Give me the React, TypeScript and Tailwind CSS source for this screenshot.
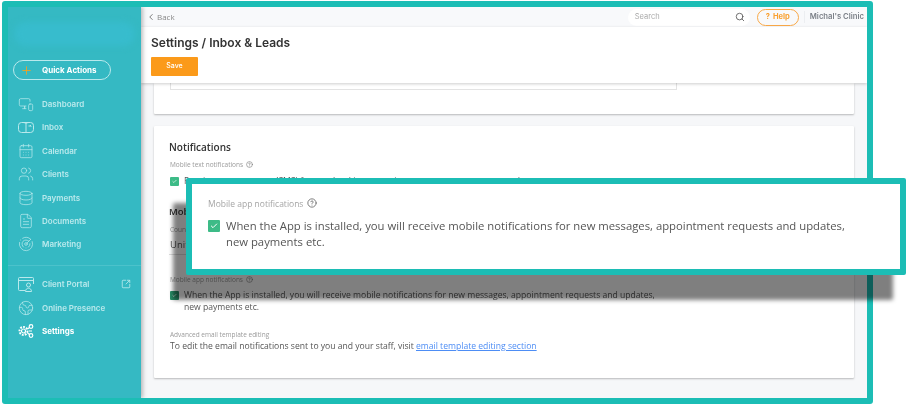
import {
  CalendarDays,
  Check,
  ChevronLeft,
  CircleHelp,
  Database,
  Earth,
  FileText,
  MonitorSmartphone,
  Plus,
  Radar,
  Search,
  SquareArrowOutUpRight,
  Users,
} from "lucide-react";
import type { ReactNode } from "react";

const sans = "font-['Open_Sans',sans-serif]";
const nav = "font-['Inter',sans-serif]";

function InboxIcon() {
  return (
    <svg width="16" height="13" viewBox="0 0 16 13" fill="none" stroke="currentColor" strokeWidth="1">
      <rect x="0.5" y="1.500" width="15" height="10" rx="3" />
      <path d="M5 1.500c1.500 0 2.500 0.700 3 1.500v8.500M8 3c0.500-0.800 1.500-1.500 3-1.500M10.500 5h2.500M12 4l1.300 1.500" />
    </svg>
  );
}

function PortalIcon() {
  return (
    <svg width="16" height="15" viewBox="0 0 16 15" fill="none" stroke="currentColor" strokeWidth="1">
      <path d="M7 13.500H1.500a1 1 0 0 1-1-1V1.500a1 1 0 0 1 1-1h13a1 1 0 0 1 1 1V7M0.500 3.500h15" />
      <circle cx="10.500" cy="8" r="2" />
      <path d="M7.500 14.500c0-2 1.300-3.300 3-3.300s3 1.300 3 3.300z" />
    </svg>
  );
}

function GearsIcon() {
  return (
    <svg width="16" height="14" viewBox="0 0 16 14" fill="none" stroke="currentColor" strokeWidth="1.200">
      <circle cx="5.500" cy="7" r="2" />
      <circle cx="5.500" cy="7" r="4" strokeDasharray="1.800 1.200" strokeWidth="2" />
      <circle cx="13" cy="2.500" r="1.800" />
      <circle cx="13" cy="11.500" r="1.800" />
      <path d="M9.500 5l2-1.500M9.500 9l2 1.500M11 7h3" />
    </svg>
  );
}

const topItems: { label: string; icon: ReactNode }[] = [
  { label: "Dashboard", icon: <MonitorSmartphone size={16} strokeWidth={1.1} /> },
  { label: "Inbox", icon: <InboxIcon /> },
  { label: "Calendar", icon: <CalendarDays size={16} strokeWidth={1.1} /> },
  { label: "Clients", icon: <Users size={16} strokeWidth={1.1} /> },
  { label: "Payments", icon: <Database size={16} strokeWidth={1.1} /> },
  { label: "Documents", icon: <FileText size={16} strokeWidth={1.1} /> },
  { label: "Marketing", icon: <Radar size={16} strokeWidth={1.1} /> },
];

function NavRow({ label, icon, active, extra }: { label: string; icon: ReactNode; active?: boolean; extra?: ReactNode }) {
  return (
    <div className={`flex h-[23.400px] items-center pl-[10px] pr-[10px] ${active ? "text-white" : "text-[#b9e9ec]"}`}>
      <div className="flex w-[16px] justify-center">{icon}</div>
      <span className={`ml-[8px] text-[8px] ${active ? "font-bold" : "font-semibold"} ${nav}`}>{label}</span>
      {extra}
    </div>
  );
}

function Sidebar() {
  return (
    <aside className="relative z-20 flex w-[133px] shrink-0 flex-col bg-[#35b9c3] pt-[15px] shadow-[2px_0_4px_rgba(0,0,0,0.25)]">
      {/* logo is smudged out in the picture */}
      <div className="mx-[6px] h-[24px] rounded-full bg-[#37bccd] blur-[3px]" />
      <div className={`mx-[5px] mt-[14px] flex h-[20px] w-[98px] items-center rounded-full border border-[#b9e9ec] pl-[6px] text-[8px] font-bold text-white ${nav}`}>
        <Plus size={13} strokeWidth={1.5} className="text-[#f7a11a]" />
        <span className="ml-[9px]">Quick Actions</span>
      </div>
      <nav className="mt-[12.300px]">
        {topItems.map((item) => (
          <NavRow key={item.label} label={item.label} icon={item.icon} />
        ))}
      </nav>
      <div className="mt-[8.500px] border-t border-[#4cc2cb]" />
      <div className="mt-[7px]">
        <NavRow
          label="Client Portal"
          icon={<PortalIcon />}
          extra={<SquareArrowOutUpRight size={10} strokeWidth={2} className="ml-auto" />}
        />
        <NavRow label="Online Presence" icon={<Earth size={16} strokeWidth={1.1} />} />
        <NavRow label="Settings" active icon={<GearsIcon />} />
      </div>
    </aside>
  );
}

function TopBar() {
  return (
    <div className="flex h-[20px] items-center bg-[#f8f9fb] pl-[5px] pr-[3px]">
      <ChevronLeft size={10} className="text-[#666]" />
      <span className={`ml-[1px] text-[8px] text-[#888] ${sans}`}>Back</span>
      <div className="ml-auto flex h-[17px] w-[122px] items-center justify-between rounded-full bg-white pl-[7px] pr-[5px]">
        <span className={`text-[7.500px] text-[#aaa] ${nav}`}>Search</span>
        <Search size={10} className="text-[#555]" />
      </div>
      <div className={`ml-[7px] flex h-[17px] w-[42px] items-center justify-center gap-[3px] rounded-full border border-[#f9a948] text-[7.500px] font-bold text-[#f9a030] ${nav}`}>
        <span>?</span>
        <span>Help</span>
      </div>
      <div className="ml-[5px] h-[12px] border-l border-[#eceef1]" />
      <span className={`ml-[5px] whitespace-nowrap text-[7.700px] font-semibold text-[#7a7f87] ${nav}`}>Michal's Clinic</span>
    </div>
  );
}

function Tick({ size, dim }: { size: number; dim?: boolean }) {
  return (
    <span
      className={`flex shrink-0 items-center justify-center rounded-[1px] ${dim ? "bg-[#2a8f68]" : "bg-[#3dbb87]"}`}
      style={{ width: size, height: size }}
    >
      <Check size={size - 4} strokeWidth={3} className="text-white" />
    </span>
  );
}

function Label({ children }: { children: ReactNode }) {
  return <div className={`text-[6.500px] leading-[9px] text-[#9a9a9a] ${sans}`}>{children}</div>;
}

function Content() {
  return (
    <div className="flex-1 overflow-hidden bg-[#f6f7f9] px-[13px]">
      <div className="h-[31px] rounded-b-[1px] bg-white pl-[16px] shadow-[0_1px_2px_rgba(0,0,0,0.25)]">
        <div className="h-[7px] w-[507px] border border-t-0 border-[#e3e3e3]" />
      </div>
      <div className={`mt-[12px] h-[252px] rounded-[1px] bg-white pl-[15px] pt-[14px] text-[8.600px] text-[#555] shadow-[0_1px_2px_rgba(0,0,0,0.25)] ${sans}`}>
        <div className="text-[10px] font-semibold leading-[14px] text-[#333]">Notifications</div>
        <div className="mt-[6px] flex items-center gap-[3px] pl-[1px]">
          <Label>Mobile text notifications</Label>
          <CircleHelp size={7} className="text-[#777]" />
        </div>
        <div className="mt-[6px] flex items-center gap-[5px] pl-[1px] leading-[12px]">
          <Tick size={9} />
          <span>Receive text messages (SMS) for new bookings, appointment requests, requests and payments</span>
        </div>
        <div className="mt-[18px] text-[9.500px] font-semibold leading-[14px] text-[#333]">Mobile</div>
        <div className="mt-[6px] pl-[1px]">
          <Label>Country</Label>
        </div>
        <div className="mt-[4px] h-[17px] w-[250px] border-b border-[#ddd] pl-[1px] text-[9.500px] leading-[14px]">United States</div>
        <div className="mt-[20px] flex items-center gap-[3px] pl-[1px]">
          <Label>Mobile app notifications</Label>
          <CircleHelp size={7} className="text-[#777]" />
        </div>
        <div className="mt-[5px] flex gap-[5px] pl-[1px] leading-[12px]">
          <span className="mt-[1.500px]">
            <Tick size={9} dim />
          </span>
          <span className="w-[478px]">
            When the App is installed, you will receive mobile notifications for new messages, appointment requests and updates, new payments etc.
          </span>
        </div>
        <div className="mt-[17px] pl-[1px]">
          <Label>Advanced email template editing</Label>
        </div>
        <div className="mt-[1px] pl-[1px] leading-[12px]">
          To edit the email notifications sent to you and your staff, visit{" "}
          <span className="text-[#4d8df5] underline">email template editing section</span>
        </div>
      </div>
    </div>
  );
}

export default function App() {
  return (
    <div className="relative h-[411px] w-[907px] overflow-hidden bg-white blur-[0.35px]">
      <div className="ml-[2px] mt-[1px] flex h-[403px] w-[871px] overflow-hidden rounded-[3px] border-[6px] border-[#1cbdb5]">
        <Sidebar />
        <main className="flex min-w-0 flex-1 flex-col">
          <TopBar />
          <div className="relative z-10 h-[56px] bg-white pl-[10px] pt-[9px] shadow-[0_1px_3px_rgba(0,0,0,0.2)]">
            <h1 className={`text-[12px] font-semibold leading-[14px] text-[#333] ${nav}`}>Settings / Inbox &amp; Leads</h1>
            <button className={`mt-[7px] h-[19px] w-[47px] rounded-[1px] bg-[#fb9a1a] text-[7px] font-medium text-white ${nav}`}>Save</button>
          </div>
          <Content />
        </main>
      </div>

      {/* zoomed callout over the page */}
      <div className={`absolute left-[186px] top-[178px] z-30 h-[97px] w-[720px] rounded-[2px] border-[6px] border-[#1cbdb5] bg-white pl-[16px] pt-[14px] shadow-[-13px_25px_4px_rgba(0,0,0,0.5)] ${sans}`}>
        <div className="flex items-center gap-[4px] text-[8.500px] leading-[12px] text-[#a5a5a5]">
          Mobile app notifications
          <CircleHelp size={10} className="-mt-[2px] text-[#666]" />
        </div>
        <div className="mt-[8px] flex gap-[6px] text-[11.300px] leading-[16px] text-[#555]">
          <span className="mt-[2px]">
            <Tick size={12} />
          </span>
          <span className="w-[630px]">
            When the App is installed, you will receive mobile notifications for new messages, appointment requests and updates, new payments etc.
          </span>
        </div>
      </div>
    </div>
  );
}
